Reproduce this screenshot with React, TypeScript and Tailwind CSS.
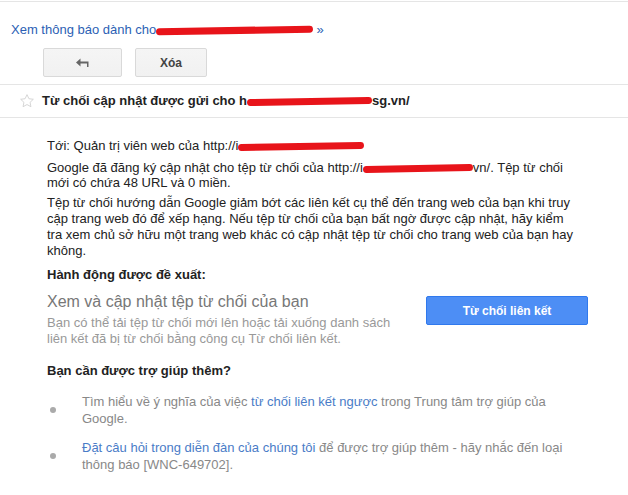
import React from 'react';

// Red brush-stroke used to hide the site address in the screenshot.
const Redact = ({ width, className = '' }: { width: number; className?: string }) => (
    <span
        className={`inline-block align-middle h-[7px] bg-[#e8141a] rounded-full -rotate-1 ${className}`}
        style={{ width }}
    />
);

const Star = () => (
    <svg width="16" height="16" viewBox="0 0 24 24" fill="none" stroke="#d0d0d0" strokeWidth="1.3">
        <path d="M12 2.5l2.9 6.1 6.6.8-4.9 4.6 1.3 6.6L12 17.3l-5.9 3.3 1.3-6.6-4.9-4.6 6.6-.8z" />
    </svg>
);

const BackArrow = () => (
    <svg width="14" height="10" viewBox="0 0 14 10" fill="#666">
        <path d="M0 4.5L4.5 0.5V3.5H12.5V9H11V5.5H4.5V8.5Z" />
    </svg>
);

export default function App() {
    return (
        <div className="w-[628px] h-[495px] bg-white text-[13px] text-[#222] font-['Liberation_Sans',Arial,sans-serif] overflow-hidden">
            <div className="border-t border-[#e5e5e5] mt-px pt-[14px] pl-[11px]">
                <a className="text-[#2c5fb4] leading-[28px]">
                    Xem thông báo dành cho <Redact width={157} className="-ml-1" /> »
                </a>
            </div>
            <div className="flex gap-[13px] pl-[43px] pt-[4px] pb-[7px]">
                <button className="w-[79px] h-[29px] flex items-center justify-center rounded-[2px] border border-[#d9d9d9] bg-gradient-to-b from-[#f5f5f5] to-[#f1f1f1]">
                    <BackArrow />
                </button>
                <button className="w-[72px] h-[29px] flex items-center justify-center rounded-[2px] border border-[#d9d9d9] bg-gradient-to-b from-[#f5f5f5] to-[#f1f1f1] text-[12px] font-bold text-[#444]">
                    Xóa
                </button>
            </div>
            <div className="border-t border-b border-[#e5e5e5] h-[34px] flex items-center pl-[19px] gap-[7px]">
                <Star />
                <span className="font-bold text-[#222]">
                    Từ chối cập nhật được gửi cho h<Redact width={125} />sg.vn/
                </span>
            </div>

            <div className="pl-[47px] pr-[49px] pt-[20px]">
                <p className="leading-[15px]">
                    Tới: Quản trị viên web của http://i<Redact width={126} />
                </p>
                <p className="mt-[7px] leading-[15px]">
                    Google đã đăng ký cập nhật cho tệp từ chối của http://i<Redact width={110} />vn/. Tệp từ chối mới có chứa 48 URL và 0 miền.
                </p>
                <p className="mt-[5px] leading-[16px]">
                    Tệp từ chối hướng dẫn Google giảm bớt các liên kết cụ thể đến trang web của bạn khi truy cập trang web đó để xếp hạng. Nếu tệp từ chối của bạn bất ngờ được cập nhật, hãy kiểm tra xem chủ sở hữu một trang web khác có cập nhật tệp từ chối cho trang web của bạn hay không.
                </p>
                <p className="mt-[8px] font-bold leading-[16px]">Hành động được đề xuất:</p>

                <div className="flex items-start mt-[9px] -mr-[9px]">
                    <div className="w-[362px]">
                        <p className="text-[16px] text-[#777] leading-[20px]">Xem và cập nhật tệp từ chối của bạn</p>
                        <p className="text-[#999] leading-[16px] mt-[3px]">
                            Bạn có thể tải tệp từ chối mới lên hoặc tải xuống danh sách liên kết đã bị từ chối bằng công cụ Từ chối liên kết.
                        </p>
                    </div>
                    <button className="ml-auto mt-[4px] w-[162px] h-[29px] rounded-[2px] border border-[#3079ed] bg-[#4d8ef5] text-white text-[12px] font-bold">
                        Từ chối liên kết
                    </button>
                </div>

                <p className="mt-[16px] font-bold leading-[16px]">Bạn cần được trợ giúp thêm?</p>

                <ul className="mt-[14px] text-[#888] leading-[17px] -mr-[9px]">
                    <li className="flex items-center">
                        <span className="w-[6px] h-[6px] rounded-full bg-[#aaa] ml-[3px] mr-[26px] shrink-0" />
                        <span>
                            Tìm hiểu về ý nghĩa của việc <a className="text-[#4a7cc7]">từ chối liên kết ngược</a> trong Trung tâm trợ giúp của Google.
                        </span>
                    </li>
                    <li className="flex items-center mt-[12px]">
                        <span className="w-[6px] h-[6px] rounded-full bg-[#aaa] ml-[3px] mr-[26px] shrink-0" />
                        <span>
                            <a className="text-[#4a7cc7]">Đặt câu hỏi trong diễn đàn của chúng tôi</a> để được trợ giúp thêm - hãy nhắc đến loại thông báo [WNC-649702].
                        </span>
                    </li>
                </ul>
            </div>
        </div>
    );
}
